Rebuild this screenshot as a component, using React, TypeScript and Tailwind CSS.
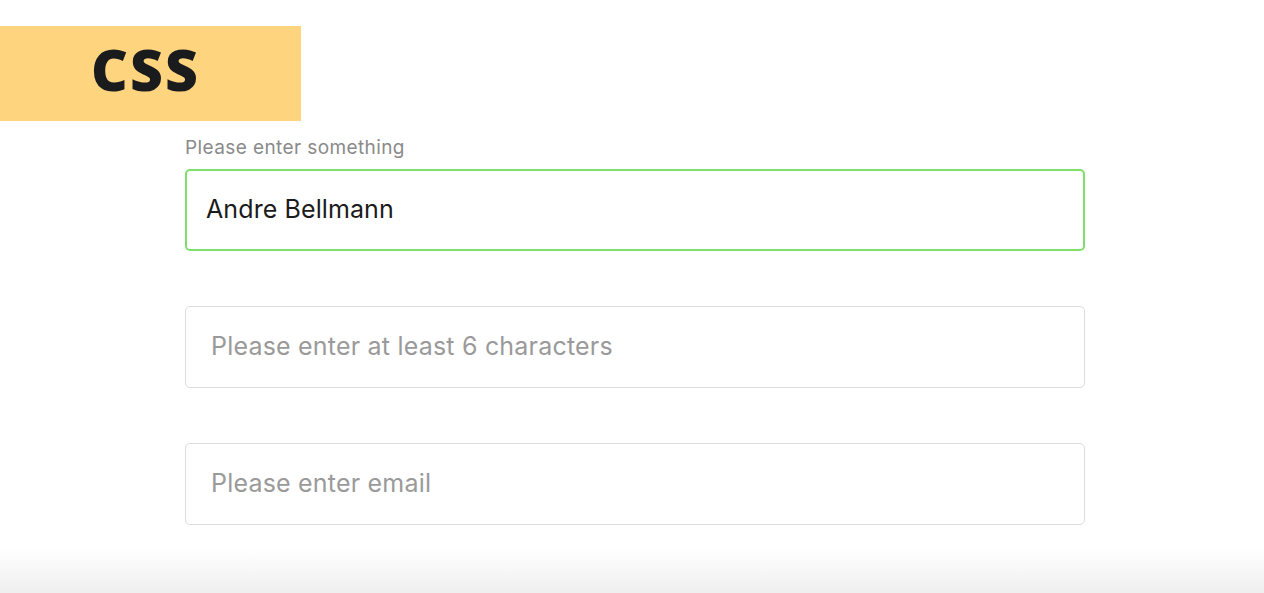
import React from "react";

function Field({ text, dark, green }: { text: string; dark?: boolean; green?: boolean }) {
  return (
    <div
      className={
        green
          ? "h-[82px] border-2 border-[#7edf6b] rounded-[5px] flex items-center pl-[19px]"
          : "h-[82px] border border-[#dcdcdc] rounded-[5px] flex items-center pl-[25px]"
      }
    >
      <span className={dark ? "text-[25px] text-[#1b1b1b] tracking-[0.1px]" : "text-[25px] text-[#9a9a9a] tracking-[0.2px]"}>{text}</span>
    </div>
  );
}

export default function App() {
  return (
    <div className="w-[1264px] h-[593px] bg-white overflow-hidden flex flex-col" style={{ fontFamily: 'Inter, "Liberation Sans", Arial, sans-serif' }}>
      <div className="mt-[26px] w-[301px] h-[95px] shrink-0 bg-[#ffd47e] flex items-center justify-center">
        <span className="text-[57px] font-extrabold text-[#1a1b1d] tracking-[2px] leading-none pr-[10px] pb-[8px]" style={{ fontFamily: '"Open Sans", sans-serif', fontWeight: 800 }}>CSS</span>
      </div>
      <div className="mt-[15px] ml-[185px] w-[900px] flex flex-col gap-[55px]">
        <div className="flex flex-col gap-[9px]">
          <label className="text-[19px] text-[#8a8a8a] leading-[24px] tracking-[0.4px]">Please enter something</label>
          <Field text="Andre Bellmann" dark green />
        </div>
        <Field text="Please enter at least 6 characters" />
        <Field text="Please enter email" />
      </div>
      <div className="flex-1" />
      <div className="h-[45px] shrink-0 bg-gradient-to-b from-white to-[#efefef]" />
    </div>
  );
}
